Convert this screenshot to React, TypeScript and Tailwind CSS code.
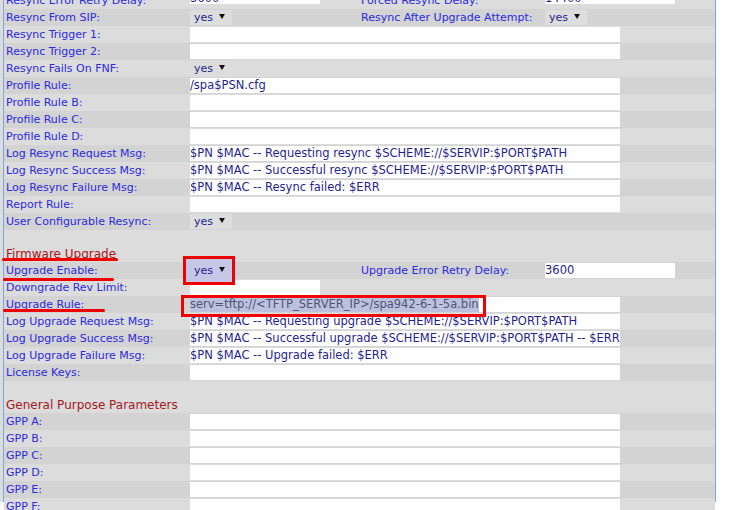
import type { ReactNode } from "react";

type Row =
  | { kind: "text"; label: string; value?: string }
  | { kind: "rule"; label: string; value: string }
  | { kind: "select"; label: string; active?: boolean }
  | { kind: "pair"; label: string; left: ReactNode; label2: string; right: ReactNode; first?: boolean }
  | { kind: "blank" }
  | { kind: "header"; label: string };

const Input = ({ value = "", wide = true, first = false }: { value?: string; wide?: boolean; first?: boolean }) => (
  <div
    className={`flex items-center overflow-hidden whitespace-nowrap bg-white text-[11.5px] text-[#1f1f8f] ${
      wide ? "w-[430px]" : "w-[130px]"
    } ${first ? "h-[11px] self-start mt-[1px] leading-[11px] items-end" : "h-[15px]"}`}
  >
    {value}
  </div>
);

const Caret = () => (
  <svg width="6" height="5" viewBox="0 0 6 5" className="ml-[6px] -mt-[2px]">
    <path d="M0 0h6L3 5z" fill="#111" />
  </svg>
);

const Select = ({ active = false }: { active?: boolean }) =>
  active ? (
    <div className="relative z-10 -ml-[4px] flex h-[23px] w-[46px] items-center bg-[#c4c8e6] pl-[8px] text-[#1f1f8f]">
      <span>yes</span>
      <Caret />
    </div>
  ) : (
    <div className="flex h-[15px] w-[42px] items-center bg-[#dddddd] pl-[4px] text-[#1f1f8f]">
      <span>yes</span>
      <Caret />
    </div>
  );

const rows: Row[] = [
  { kind: "pair", label: "Resync Error Retry Delay:", left: <Input value="3600" wide={false} first />, label2: "Forced Resync Delay:", right: <Input value="14400" wide={false} first />, first: true },
  { kind: "pair", label: "Resync From SIP:", left: <Select />, label2: "Resync After Upgrade Attempt:", right: <Select /> },
  { kind: "text", label: "Resync Trigger 1:" },
  { kind: "text", label: "Resync Trigger 2:" },
  { kind: "select", label: "Resync Fails On FNF:" },
  { kind: "text", label: "Profile Rule:", value: "/spa$PSN.cfg" },
  { kind: "text", label: "Profile Rule B:" },
  { kind: "text", label: "Profile Rule C:" },
  { kind: "text", label: "Profile Rule D:" },
  { kind: "text", label: "Log Resync Request Msg:", value: "$PN $MAC -- Requesting resync $SCHEME://$SERVIP:$PORT$PATH" },
  { kind: "text", label: "Log Resync Success Msg:", value: "$PN $MAC -- Successful resync $SCHEME://$SERVIP:$PORT$PATH" },
  { kind: "text", label: "Log Resync Failure Msg:", value: "$PN $MAC -- Resync failed: $ERR" },
  { kind: "text", label: "Report Rule:" },
  { kind: "select", label: "User Configurable Resync:" },
  { kind: "blank" },
  { kind: "header", label: "Firmware Upgrade" },
  { kind: "pair", label: "Upgrade Enable:", left: <Select active />, label2: "Upgrade Error Retry Delay:", right: <Input value="3600" wide={false} /> },
  { kind: "pair", label: "Downgrade Rev Limit:", left: <Input wide={false} />, label2: "", right: null },
  { kind: "rule", label: "Upgrade Rule:", value: "serv=tftp://<TFTP_SERVER_IP>/spa942-6-1-5a.bin" },
  { kind: "text", label: "Log Upgrade Request Msg:", value: "$PN $MAC -- Requesting upgrade $SCHEME://$SERVIP:$PORT$PATH" },
  { kind: "text", label: "Log Upgrade Success Msg:", value: "$PN $MAC -- Successful upgrade $SCHEME://$SERVIP:$PORT$PATH -- $ERR" },
  { kind: "text", label: "Log Upgrade Failure Msg:", value: "$PN $MAC -- Upgrade failed: $ERR" },
  { kind: "text", label: "License Keys:" },
  { kind: "blank" },
  { kind: "header", label: "General Purpose Parameters" },
  { kind: "text", label: "GPP A:" },
  { kind: "text", label: "GPP B:" },
  { kind: "text", label: "GPP C:" },
  { kind: "text", label: "GPP D:" },
  { kind: "text", label: "GPP E:" },
  { kind: "text", label: "GPP F:" },
];

// darker stripes, by row index
const darkRows = new Set([1, 3, 5, 7, 9, 11, 13, 16, 18, 20, 22, 25, 27, 29]);

function ConfigRow({ row, dark }: { row: Row; dark: boolean }) {
  if (row.kind === "blank") return <div className="h-[15px] bg-[#dcdcdc]" />;
  if (row.kind === "header")
    return (
      <div className="flex h-[17px] items-center bg-[#dcdcdc] pl-[2px] text-[12px] text-[#a3191c]">
        {row.label}
      </div>
    );

  const bg = dark ? "bg-[#d3d3d3]" : "bg-[#dcdcdc]";

  return (
    <div className={`flex h-[17px] items-center ${bg}`}>
      <div className="w-[186px] shrink-0 pl-[2px] whitespace-nowrap text-[#2a2ae0]">{row.label}</div>
      {row.kind === "text" && <Input value={row.value} />}
      {row.kind === "select" && <Select />}
      {row.kind === "rule" && (
        <div className="flex h-[15px] w-[430px] items-stretch bg-white">
          <span className="flex items-center whitespace-nowrap bg-[#bcc1de] text-[11.5px] text-[#4f5478]">{row.value}</span>
        </div>
      )}
      {row.kind === "pair" && (
        <>
          <div className={`flex w-[171px] shrink-0 ${row.first ? "self-stretch" : "items-center"}`}>{row.left}</div>
          <div className="w-[184px] shrink-0 whitespace-nowrap text-[#2a2ae0]">{row.label2}</div>
          <div className={`flex ${row.first ? "self-stretch" : "items-center"}`}>{row.right}</div>
        </>
      )}
    </div>
  );
}

export default function App() {
  return (
    <div className="relative h-[510px] w-[732px] overflow-hidden bg-white font-['DejaVu_Sans',sans-serif] text-[11px] leading-none">
      <div className="h-full w-[716px] border-r border-[#7aa7e8] bg-[#dcdcdc]">
        <div className="ml-[3px] h-full border-l border-[#7aa7e8]">
          <div className="-mt-[8px] flex flex-col">
            {rows.map((row, i) => (
              <ConfigRow key={i} row={row} dark={darkRows.has(i)} />
            ))}
          </div>
        </div>
      </div>

      {/* annotations */}
      <div className="pointer-events-none absolute left-[2px] top-[258px] h-[3px] w-[116px] rounded-full bg-[#ee0000]" />
      <div className="pointer-events-none absolute left-[3px] top-[278px] h-[3px] w-[111px] rounded-full bg-[#ee0000]" />
      <div className="pointer-events-none absolute left-[3px] top-[309px] h-[3px] w-[102px] rounded-full bg-[#ee0000]" />
      <div className="pointer-events-none absolute left-[183px] top-[256px] z-20 h-[29px] w-[52px] border-[3px] border-[#f00000]" />
      <div className="pointer-events-none absolute left-[181px] top-[295px] z-20 h-[22px] w-[305px] border-[3px] border-[#f00000]" />
    </div>
  );
}
